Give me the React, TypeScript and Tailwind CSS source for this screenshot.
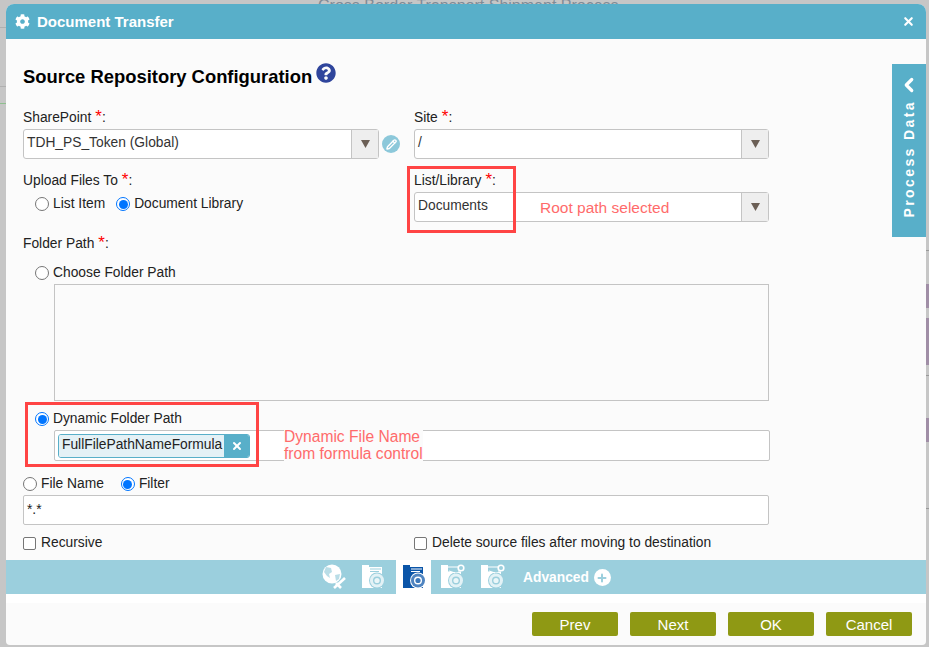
import { ChevronLeft, Pencil, Plus, X } from "lucide-react";
import { FaCog, FaQuestionCircle } from "react-icons/fa";

const BAND = "#9bcfdd";

function Req() {
  return (
    <>
      <span className="text-[#f00] text-[17px] leading-none ml-[4px]">*</span>
      <span>:</span>
    </>
  );
}

function Radio({ on }: { on?: boolean }) {
  return on ? (
    <span className="w-[14px] h-[14px] rounded-full border-[1.5px] border-[#0075ff] bg-white flex items-center justify-center shrink-0">
      <span className="w-[9px] h-[9px] rounded-full bg-[#0075ff]" />
    </span>
  ) : (
    <span className="w-[14px] h-[14px] rounded-full border border-[#767676] bg-white shrink-0" />
  );
}

function Check() {
  return <span className="w-[13px] h-[13px] rounded-[2px] border border-[#767676] bg-white shrink-0" />;
}

function Label({ children, className = "" }: { children: React.ReactNode; className?: string }) {
  return <div className={`h-[20px] leading-[22px] ${className}`}>{children}</div>;
}

function Select({ value, className }: { value: string; className: string }) {
  return (
    <div className={`h-[30px] flex items-stretch bg-white border border-[#c4c4c4] rounded-[3px] ${className}`}>
      <span className="flex-1 pl-[3px] leading-[26px] text-[#333]">{value}</span>
      <span className="w-[27px] bg-[#eeeeee] border-l border-[#c4c4c4] flex items-center justify-center">
        <svg width="9" height="8" viewBox="0 0 9 8">
          <path d="M0 0h9L4.5 8z" fill="#6b5f55" />
        </svg>
      </span>
    </div>
  );
}

function TabIcon({ color, bg, gear }: { color: string; bg: string; gear?: boolean }) {
  return (
    <svg width="26" height="26" viewBox="0 0 26 26">
      <path d="M2 1h7v2h13v21H2z" fill={color} />
      <path d="M10 5h11M10 7.5h9" stroke={bg} strokeWidth="1.1" />
      <circle cx="17" cy="16.5" r="8" fill={bg} />
      <circle cx="17" cy="16.5" r="7" fill={color} opacity={0.72} />
      <circle cx="17" cy="16.5" r="4" fill={bg} />
      <circle cx="17" cy="16.5" r="2.6" fill={color} opacity={0.8} />
      {gear && (
        <>
          <rect x="9" y="1" width="14" height="6.5" fill={bg} />
          <path d="M9 3h10M10 7l6 2" stroke={color} strokeWidth="1.2" />
          <circle cx="22" cy="4" r="2.8" fill="none" stroke={color} strokeWidth="1.6" />
        </>
      )}
    </svg>
  );
}

function GlobeIcon() {
  return (
    <svg width="26" height="26" viewBox="0 0 26 26">
      <circle cx="11" cy="10" r="9.5" fill="#fff" />
      <path d="M5 3l5 1 1 4-3 2 1 4-3-2-3-4zM14 11l5-1-1 5-3 2z" fill={BAND} opacity={0.7} />
      <path d="M13 24l11-10" stroke="#fff" strokeWidth="2.6" />
      <path d="M20 24l-5-5" stroke="#fff" strokeWidth="2.6" />
    </svg>
  );
}

function Btn({ label }: { label: string }) {
  return (
    <button className="w-[86px] h-[24px] bg-[#8f9914] rounded-[2px] text-white text-[15px] leading-[25px]">
      {label}
    </button>
  );
}

export default function App() {
  return (
    <div className="w-[929px] h-[647px] overflow-hidden bg-[#c6c6c6] relative font-['Liberation_Sans',sans-serif] text-[13.8px] text-[#222]">
      {/* page behind the dialog */}
      <div className="absolute top-[-6px] left-[318px] text-[16px] text-[#7f8b96] whitespace-nowrap">
        Cross Border Transport Shipment Process
      </div>
      <div className="absolute left-0 top-[27px] w-[6px] h-px bg-[#b0b0b0]" />
      <div className="absolute left-0 top-[86px] w-[6px] h-px bg-[#b0b0b0]" />
      <div className="absolute left-0 top-[103px] w-[6px] h-px bg-[#8fbf8f]" />
      <div className="absolute right-0 top-[284px] w-[3px] h-[24px] bg-[#a08ea6]" />
      <div className="absolute right-0 top-[318px] w-[3px] h-[47px] bg-[#a08ea6]" />
      <div className="absolute right-0 top-[418px] w-[3px] h-[24px] bg-[#a08ea6]" />
      <div className="absolute right-0 top-[250px] w-[3px] h-px bg-[#999]" />
      <div className="absolute right-0 top-[375px] w-[3px] h-px bg-[#999]" />
      <div className="absolute right-0 top-[508px] w-[3px] h-px bg-[#999]" />

      <div className="absolute left-[6px] top-[4px] w-[920px] h-[641px] bg-[#fbfbfb] rounded-t-[8px] rounded-b-[4px] flex flex-col overflow-hidden">
        <div className="h-[35px] shrink-0 bg-[#58afc9] flex items-center pl-[9px] pr-[11px] text-white">
          <FaCog className="w-[15px] h-[15px] -mt-[1px]" />
          <span className="ml-[7px] mt-[2px] font-bold text-[15px]">Document Transfer</span>
          <X className="ml-auto w-[13px] h-[13px]" strokeWidth={4} />
        </div>

        <div className="flex-1 relative pl-[17px]">
          <div className="flex items-start mt-[23px] h-[30px]">
            <h1 className="font-bold text-[18.4px] text-black mt-[3px] leading-[24px]">Source Repository Configuration</h1>
            <FaQuestionCircle className="ml-[4px] mt-[1px] w-[20px] h-[20px] text-[#2f459c]" />
          </div>

          <div className="flex mt-[15px]">
            <div className="w-[391px]">
              <Label className="mb-[2px]">SharePoint<Req /></Label>
              <div className="flex items-center">
                <Select value="TDH_PS_Token (Global)" className="w-[356px]" />
                <span className="ml-[3px] w-[18px] h-[18px] rounded-full bg-[#8cc8da] flex items-center justify-center">
                  <Pencil className="w-[11px] h-[11px] text-white" strokeWidth={3} />
                </span>
              </div>
              <Label className="mt-[11px]">Upload Files To<Req /></Label>
              <div className="flex items-center h-[28px] pl-[12px]">
                <Radio />
                <span className="ml-[4px]">List Item</span>
                <span className="ml-[11px]"><Radio on /></span>
                <span className="ml-[4px]">Document Library</span>
              </div>
            </div>
            <div className="w-[355px]">
              <Label className="mb-[2px]">Site<Req /></Label>
              <Select value="/" className="w-full" />
              <Label className="mt-[11px] mb-[2px]">List/Library<Req /></Label>
              <Select value="Documents" className="w-full" />
            </div>
          </div>

          <Label className="mt-[11px]">Folder Path<Req /></Label>
          <div className="mt-[10px] flex items-center h-[20px] pl-[12px]">
            <Radio />
            <span className="ml-[4px]">Choose Folder Path</span>
          </div>
          <div className="ml-[31px] mt-[1px] w-[715px] h-[117px] border border-[#c4c4c4]" />

          <div className="mt-[8px] flex items-center h-[20px] pl-[12px]">
            <Radio on />
            <span className="ml-[4px]">Dynamic Folder Path</span>
          </div>
          <div className="ml-[31px] mt-[1px] w-[716px] h-[31px] border border-[#c4c4c4] rounded-[2px] bg-white flex items-center pl-[3px]">
            <span className="h-[24px] flex items-stretch rounded-[3px] border border-[#58afc9] overflow-hidden">
              <span className="bg-[#e4f1f6] pl-[3px] pr-[2px] leading-[20px]">FullFilePathNameFormula</span>
              <span className="w-[25px] bg-[#58afc9] flex items-center justify-center">
                <X className="w-[12px] h-[12px] text-white" strokeWidth={4} />
              </span>
            </span>
          </div>

          <div className="mt-[13px] flex items-center h-[20px]">
            <Radio />
            <span className="ml-[4px]">File Name</span>
            <span className="ml-[17px]"><Radio on /></span>
            <span className="ml-[4px]">Filter</span>
          </div>
          <div className="mt-[1px] w-[746px] h-[30px] border border-[#c4c4c4] rounded-[2px] bg-white pl-[3px] leading-[28px]">*.*</div>

          <div className="flex mt-[8px] h-[20px]">
            <div className="w-[391px] flex items-center">
              <Check />
              <span className="ml-[5px]">Recursive</span>
            </div>
            <div className="flex items-center">
              <Check />
              <span className="ml-[5px]">Delete source files after moving to destination</span>
            </div>
          </div>

          {/* annotations on top of the form */}
          <div className="absolute left-[401px] top-[127px] w-[109px] h-[67px] border-[3px] border-[#ff4444]" />
          <div className="absolute left-[534px] top-[157px] text-[15.5px] text-[#ff6b6b]">Root path selected</div>
          <div className="absolute left-[19px] top-[363px] w-[234px] h-[65px] border-[3px] border-[#ff4444]" />
          <div className="absolute left-[278px] top-[388px] py-[1px] text-[15.6px] leading-[17px] text-[#ff6b6b] bg-[#fbfbfb]">
            Dynamic File Name<br />from formula control
          </div>

          {/* side tab */}
          <div className="absolute right-0 top-[25px] w-[34px] h-[173px] bg-[#58afc9] text-white flex flex-col items-center pt-[10px]">
            <ChevronLeft className="w-[22px] h-[22px]" strokeWidth={3.5} />
            <span className="mt-[4px] [writing-mode:vertical-rl] rotate-180 font-bold text-[14px] tracking-[2.4px] whitespace-nowrap">Process Data</span>
          </div>
        </div>

        <div className="h-[34px] shrink-0 bg-[#9bcfdd] flex items-stretch pl-[310px] text-white">
          <span className="w-[36px] flex items-center justify-center"><GlobeIcon /></span>
          <span className="ml-[3px] w-[36px] flex items-center justify-center"><TabIcon color="#fff" bg={BAND} /></span>
          <span className="ml-[5px] w-[35px] bg-white flex items-center justify-center"><TabIcon color="#0b55a8" bg="#fff" /></span>
          <span className="ml-[3px] w-[36px] flex items-center justify-center"><TabIcon color="#fff" bg={BAND} gear /></span>
          <span className="ml-[4px] w-[36px] flex items-center justify-center"><TabIcon color="#fff" bg={BAND} gear /></span>
          <span className="ml-[13px] pt-[2px] flex items-center font-bold text-[13.8px]">Advanced</span>
          <span className="ml-[5px] mt-[1px] self-center w-[17px] h-[17px] rounded-full bg-white flex items-center justify-center">
            <Plus className="w-[12px] h-[12px] text-[#9bcfdd]" strokeWidth={4} />
          </span>
        </div>

        <div className="h-[9px] shrink-0 bg-white" />
        <div className="h-[42px] shrink-0 flex justify-end items-start pt-[9px] pr-[14px] gap-[12px]">
          <Btn label="Prev" />
          <Btn label="Next" />
          <Btn label="OK" />
          <Btn label="Cancel" />
        </div>
      </div>
    </div>
  );
}
